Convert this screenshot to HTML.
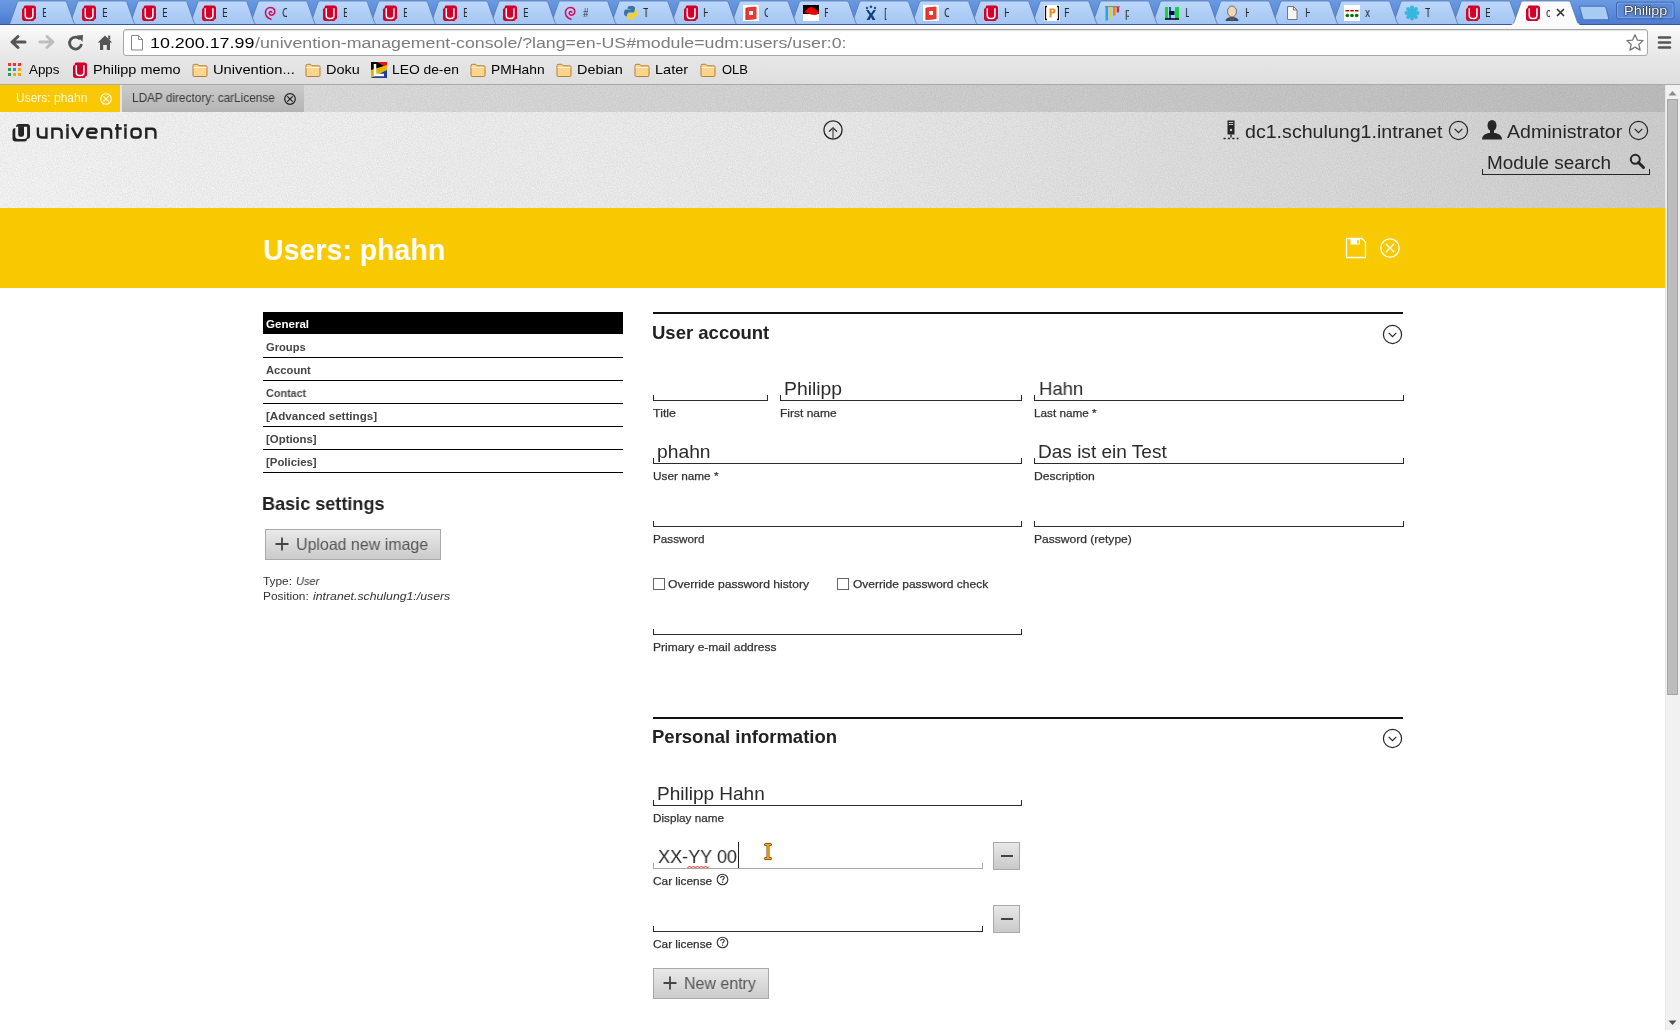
<!DOCTYPE html>
<html><head><meta charset="utf-8"><title>UMC</title>
<style>
*{box-sizing:border-box;margin:0;padding:0}
html,body{width:1680px;height:1030px;overflow:hidden;background:#fff;font-family:"Liberation Sans", sans-serif;position:relative}
svg{position:absolute;overflow:visible}
</style></head><body>
<div style="position:absolute;left:0;top:0;width:1680px;height:25px;background:linear-gradient(#6a9ae1,#5f8fdc 40%,#4a79d0)"></div>
<svg style="left:0;top:0" width="1680" height="25" viewBox="0 0 1680 25"><defs><linearGradient id="tabg" x1="0" y1="0" x2="0" y2="1"><stop offset="0" stop-color="#bcd8fb"/><stop offset="1" stop-color="#a3c5f2"/></linearGradient></defs><path d="M1451.10 24.5 C1452.60 24.5 1453.30 23.8 1453.70 22.8 L1460.70 2.9 C1461.20 1.6 1462.00 1 1463.50 1 L1507.70 1 C1509.20 1 1510.00 1.6 1510.50 2.9 L1517.50 22.8 C1517.90 23.8 1518.60 24.5 1520.10 24.5 Z" fill="url(#tabg)" stroke="#5578b0" stroke-width="0.8"/><path d="M1390.95 24.5 C1392.45 24.5 1393.15 23.8 1393.55 22.8 L1400.55 2.9 C1401.05 1.6 1401.85 1 1403.35 1 L1447.55 1 C1449.05 1 1449.85 1.6 1450.35 2.9 L1457.35 22.8 C1457.75 23.8 1458.45 24.5 1459.95 24.5 Z" fill="url(#tabg)" stroke="#5578b0" stroke-width="0.8"/><path d="M1330.80 24.5 C1332.30 24.5 1333.00 23.8 1333.40 22.8 L1340.40 2.9 C1340.90 1.6 1341.70 1 1343.20 1 L1387.40 1 C1388.90 1 1389.70 1.6 1390.20 2.9 L1397.20 22.8 C1397.60 23.8 1398.30 24.5 1399.80 24.5 Z" fill="url(#tabg)" stroke="#5578b0" stroke-width="0.8"/><path d="M1270.65 24.5 C1272.15 24.5 1272.85 23.8 1273.25 22.8 L1280.25 2.9 C1280.75 1.6 1281.55 1 1283.05 1 L1327.25 1 C1328.75 1 1329.55 1.6 1330.05 2.9 L1337.05 22.8 C1337.45 23.8 1338.15 24.5 1339.65 24.5 Z" fill="url(#tabg)" stroke="#5578b0" stroke-width="0.8"/><path d="M1210.50 24.5 C1212.00 24.5 1212.70 23.8 1213.10 22.8 L1220.10 2.9 C1220.60 1.6 1221.40 1 1222.90 1 L1267.10 1 C1268.60 1 1269.40 1.6 1269.90 2.9 L1276.90 22.8 C1277.30 23.8 1278.00 24.5 1279.50 24.5 Z" fill="url(#tabg)" stroke="#5578b0" stroke-width="0.8"/><path d="M1150.35 24.5 C1151.85 24.5 1152.55 23.8 1152.95 22.8 L1159.95 2.9 C1160.45 1.6 1161.25 1 1162.75 1 L1206.95 1 C1208.45 1 1209.25 1.6 1209.75 2.9 L1216.75 22.8 C1217.15 23.8 1217.85 24.5 1219.35 24.5 Z" fill="url(#tabg)" stroke="#5578b0" stroke-width="0.8"/><path d="M1090.20 24.5 C1091.70 24.5 1092.40 23.8 1092.80 22.8 L1099.80 2.9 C1100.30 1.6 1101.10 1 1102.60 1 L1146.80 1 C1148.30 1 1149.10 1.6 1149.60 2.9 L1156.60 22.8 C1157.00 23.8 1157.70 24.5 1159.20 24.5 Z" fill="url(#tabg)" stroke="#5578b0" stroke-width="0.8"/><path d="M1030.05 24.5 C1031.55 24.5 1032.25 23.8 1032.65 22.8 L1039.65 2.9 C1040.15 1.6 1040.95 1 1042.45 1 L1086.65 1 C1088.15 1 1088.95 1.6 1089.45 2.9 L1096.45 22.8 C1096.85 23.8 1097.55 24.5 1099.05 24.5 Z" fill="url(#tabg)" stroke="#5578b0" stroke-width="0.8"/><path d="M969.90 24.5 C971.40 24.5 972.10 23.8 972.50 22.8 L979.50 2.9 C980.00 1.6 980.80 1 982.30 1 L1026.50 1 C1028.00 1 1028.80 1.6 1029.30 2.9 L1036.30 22.8 C1036.70 23.8 1037.40 24.5 1038.90 24.5 Z" fill="url(#tabg)" stroke="#5578b0" stroke-width="0.8"/><path d="M909.75 24.5 C911.25 24.5 911.95 23.8 912.35 22.8 L919.35 2.9 C919.85 1.6 920.65 1 922.15 1 L966.35 1 C967.85 1 968.65 1.6 969.15 2.9 L976.15 22.8 C976.55 23.8 977.25 24.5 978.75 24.5 Z" fill="url(#tabg)" stroke="#5578b0" stroke-width="0.8"/><path d="M849.60 24.5 C851.10 24.5 851.80 23.8 852.20 22.8 L859.20 2.9 C859.70 1.6 860.50 1 862.00 1 L906.20 1 C907.70 1 908.50 1.6 909.00 2.9 L916.00 22.8 C916.40 23.8 917.10 24.5 918.60 24.5 Z" fill="url(#tabg)" stroke="#5578b0" stroke-width="0.8"/><path d="M789.45 24.5 C790.95 24.5 791.65 23.8 792.05 22.8 L799.05 2.9 C799.55 1.6 800.35 1 801.85 1 L846.05 1 C847.55 1 848.35 1.6 848.85 2.9 L855.85 22.8 C856.25 23.8 856.95 24.5 858.45 24.5 Z" fill="url(#tabg)" stroke="#5578b0" stroke-width="0.8"/><path d="M729.30 24.5 C730.80 24.5 731.50 23.8 731.90 22.8 L738.90 2.9 C739.40 1.6 740.20 1 741.70 1 L785.90 1 C787.40 1 788.20 1.6 788.70 2.9 L795.70 22.8 C796.10 23.8 796.80 24.5 798.30 24.5 Z" fill="url(#tabg)" stroke="#5578b0" stroke-width="0.8"/><path d="M669.15 24.5 C670.65 24.5 671.35 23.8 671.75 22.8 L678.75 2.9 C679.25 1.6 680.05 1 681.55 1 L725.75 1 C727.25 1 728.05 1.6 728.55 2.9 L735.55 22.8 C735.95 23.8 736.65 24.5 738.15 24.5 Z" fill="url(#tabg)" stroke="#5578b0" stroke-width="0.8"/><path d="M609.00 24.5 C610.50 24.5 611.20 23.8 611.60 22.8 L618.60 2.9 C619.10 1.6 619.90 1 621.40 1 L665.60 1 C667.10 1 667.90 1.6 668.40 2.9 L675.40 22.8 C675.80 23.8 676.50 24.5 678.00 24.5 Z" fill="url(#tabg)" stroke="#5578b0" stroke-width="0.8"/><path d="M548.85 24.5 C550.35 24.5 551.05 23.8 551.45 22.8 L558.45 2.9 C558.95 1.6 559.75 1 561.25 1 L605.45 1 C606.95 1 607.75 1.6 608.25 2.9 L615.25 22.8 C615.65 23.8 616.35 24.5 617.85 24.5 Z" fill="url(#tabg)" stroke="#5578b0" stroke-width="0.8"/><path d="M488.70 24.5 C490.20 24.5 490.90 23.8 491.30 22.8 L498.30 2.9 C498.80 1.6 499.60 1 501.10 1 L545.30 1 C546.80 1 547.60 1.6 548.10 2.9 L555.10 22.8 C555.50 23.8 556.20 24.5 557.70 24.5 Z" fill="url(#tabg)" stroke="#5578b0" stroke-width="0.8"/><path d="M428.55 24.5 C430.05 24.5 430.75 23.8 431.15 22.8 L438.15 2.9 C438.65 1.6 439.45 1 440.95 1 L485.15 1 C486.65 1 487.45 1.6 487.95 2.9 L494.95 22.8 C495.35 23.8 496.05 24.5 497.55 24.5 Z" fill="url(#tabg)" stroke="#5578b0" stroke-width="0.8"/><path d="M368.40 24.5 C369.90 24.5 370.60 23.8 371.00 22.8 L378.00 2.9 C378.50 1.6 379.30 1 380.80 1 L425.00 1 C426.50 1 427.30 1.6 427.80 2.9 L434.80 22.8 C435.20 23.8 435.90 24.5 437.40 24.5 Z" fill="url(#tabg)" stroke="#5578b0" stroke-width="0.8"/><path d="M308.25 24.5 C309.75 24.5 310.45 23.8 310.85 22.8 L317.85 2.9 C318.35 1.6 319.15 1 320.65 1 L364.85 1 C366.35 1 367.15 1.6 367.65 2.9 L374.65 22.8 C375.05 23.8 375.75 24.5 377.25 24.5 Z" fill="url(#tabg)" stroke="#5578b0" stroke-width="0.8"/><path d="M248.10 24.5 C249.60 24.5 250.30 23.8 250.70 22.8 L257.70 2.9 C258.20 1.6 259.00 1 260.50 1 L304.70 1 C306.20 1 307.00 1.6 307.50 2.9 L314.50 22.8 C314.90 23.8 315.60 24.5 317.10 24.5 Z" fill="url(#tabg)" stroke="#5578b0" stroke-width="0.8"/><path d="M187.95 24.5 C189.45 24.5 190.15 23.8 190.55 22.8 L197.55 2.9 C198.05 1.6 198.85 1 200.35 1 L244.55 1 C246.05 1 246.85 1.6 247.35 2.9 L254.35 22.8 C254.75 23.8 255.45 24.5 256.95 24.5 Z" fill="url(#tabg)" stroke="#5578b0" stroke-width="0.8"/><path d="M127.80 24.5 C129.30 24.5 130.00 23.8 130.40 22.8 L137.40 2.9 C137.90 1.6 138.70 1 140.20 1 L184.40 1 C185.90 1 186.70 1.6 187.20 2.9 L194.20 22.8 C194.60 23.8 195.30 24.5 196.80 24.5 Z" fill="url(#tabg)" stroke="#5578b0" stroke-width="0.8"/><path d="M67.65 24.5 C69.15 24.5 69.85 23.8 70.25 22.8 L77.25 2.9 C77.75 1.6 78.55 1 80.05 1 L124.25 1 C125.75 1 126.55 1.6 127.05 2.9 L134.05 22.8 C134.45 23.8 135.15 24.5 136.65 24.5 Z" fill="url(#tabg)" stroke="#5578b0" stroke-width="0.8"/><path d="M7.50 24.5 C9.00 24.5 9.70 23.8 10.10 22.8 L17.10 2.9 C17.60 1.6 18.40 1 19.90 1 L64.10 1 C65.60 1 66.40 1.6 66.90 2.9 L73.90 22.8 C74.30 23.8 75.00 24.5 76.50 24.5 Z" fill="url(#tabg)" stroke="#5578b0" stroke-width="0.8"/><rect x="0" y="24" width="1680" height="1" fill="#34579f"/><path d="M1579.5 6.2 L1603 6.2 C1605 6.2 1605.5 7 1606 8 L1609 19.8 L1585.5 19.8 C1583.8 19.8 1583 19 1582.5 18 Z" fill="#a8cbf6" stroke="#3f66ad" stroke-width="0.9"/><rect x="1616.5" y="2.2" width="57.5" height="16.5" rx="2" fill="#5a8ad8" stroke="#3c62a8" stroke-width="0.9"/><rect x="1617.6" y="3.2" width="55.3" height="14.5" rx="1.5" fill="none" stroke="#8ab0ea" stroke-width="0.7"/><path d="M1511.25 24.5 C1512.75 24.5 1513.45 23.8 1513.85 22.8 L1520.85 2.9 C1521.35 1.6 1522.15 1 1523.65 1 L1567.85 1 C1569.35 1 1570.15 1.6 1570.65 2.9 L1577.65 22.8 C1578.05 23.8 1578.75 24.5 1580.25 24.5 Z" fill="#fbfbfb" stroke="#5578b0" stroke-width="0.8"/><rect x="1512.25" y="23.6" width="67" height="2" fill="#fbfbfb"/></svg>
<svg style="left:21.00px;top:5px" width="16" height="16" viewBox="0 0 16 16"><path d="M4 0.6h8.5c1.5 0 2.5 1 2.5 2.5v9.3c0 1.2-.6 1.9-1.6 2.1-.3 1-1 1.5-2.2 1.5H3.5C1.9 16 1 15.1 1 13.5V5.2c0-1.2.6-1.9 1.5-2.1C2.8 1.3 3.3.6 4 .6z" fill="#d2002a"/><path d="M4.3 3.3v7.2c0 2.1.9 3 2.8 3h2c1.9 0 2.8-.9 2.8-3V3.3" fill="none" stroke="#fff" stroke-width="1.5"/></svg>
<div style="position:absolute;left:41.80px;top:4px;width:4.6px;height:17px;overflow:hidden"><div style="position:absolute;left:0;top:2.84px;font-size:12px;line-height:12px;color:#2a2a2a;white-space:nowrap;transform:scaleX(0.85);transform-origin:0 0;will-change:transform">E</div></div>
<svg style="left:81.15px;top:5px" width="16" height="16" viewBox="0 0 16 16"><path d="M4 0.6h8.5c1.5 0 2.5 1 2.5 2.5v9.3c0 1.2-.6 1.9-1.6 2.1-.3 1-1 1.5-2.2 1.5H3.5C1.9 16 1 15.1 1 13.5V5.2c0-1.2.6-1.9 1.5-2.1C2.8 1.3 3.3.6 4 .6z" fill="#d2002a"/><path d="M4.3 3.3v7.2c0 2.1.9 3 2.8 3h2c1.9 0 2.8-.9 2.8-3V3.3" fill="none" stroke="#fff" stroke-width="1.5"/></svg>
<div style="position:absolute;left:101.95px;top:4px;width:4.6px;height:17px;overflow:hidden"><div style="position:absolute;left:0;top:2.84px;font-size:12px;line-height:12px;color:#2a2a2a;white-space:nowrap;transform:scaleX(0.85);transform-origin:0 0;will-change:transform">E</div></div>
<svg style="left:141.30px;top:5px" width="16" height="16" viewBox="0 0 16 16"><path d="M4 0.6h8.5c1.5 0 2.5 1 2.5 2.5v9.3c0 1.2-.6 1.9-1.6 2.1-.3 1-1 1.5-2.2 1.5H3.5C1.9 16 1 15.1 1 13.5V5.2c0-1.2.6-1.9 1.5-2.1C2.8 1.3 3.3.6 4 .6z" fill="#d2002a"/><path d="M4.3 3.3v7.2c0 2.1.9 3 2.8 3h2c1.9 0 2.8-.9 2.8-3V3.3" fill="none" stroke="#fff" stroke-width="1.5"/></svg>
<div style="position:absolute;left:162.10px;top:4px;width:4.6px;height:17px;overflow:hidden"><div style="position:absolute;left:0;top:2.84px;font-size:12px;line-height:12px;color:#2a2a2a;white-space:nowrap;transform:scaleX(0.85);transform-origin:0 0;will-change:transform">E</div></div>
<svg style="left:201.45px;top:5px" width="16" height="16" viewBox="0 0 16 16"><path d="M4 0.6h8.5c1.5 0 2.5 1 2.5 2.5v9.3c0 1.2-.6 1.9-1.6 2.1-.3 1-1 1.5-2.2 1.5H3.5C1.9 16 1 15.1 1 13.5V5.2c0-1.2.6-1.9 1.5-2.1C2.8 1.3 3.3.6 4 .6z" fill="#d2002a"/><path d="M4.3 3.3v7.2c0 2.1.9 3 2.8 3h2c1.9 0 2.8-.9 2.8-3V3.3" fill="none" stroke="#fff" stroke-width="1.5"/></svg>
<div style="position:absolute;left:222.25px;top:4px;width:4.6px;height:17px;overflow:hidden"><div style="position:absolute;left:0;top:2.84px;font-size:12px;line-height:12px;color:#2a2a2a;white-space:nowrap;transform:scaleX(0.85);transform-origin:0 0;will-change:transform">E</div></div>
<svg style="left:261.60px;top:5px" width="16" height="16" viewBox="0 0 16 16"><path d="M9.5 14.5C5 13 3 10 3.5 6.5 4.2 3 8 1.5 10.8 3 13.5 4.5 13.5 8.5 11 9.8 8.5 11 6.5 9 7.5 7.2 8.3 6 10 6.5 9.8 7.8" fill="none" stroke="#d70a53" stroke-width="1.5"/></svg>
<div style="position:absolute;left:282.40px;top:4px;width:4.6px;height:17px;overflow:hidden"><div style="position:absolute;left:0;top:2.84px;font-size:12px;line-height:12px;color:#2a2a2a;white-space:nowrap;transform:scaleX(0.85);transform-origin:0 0;will-change:transform">C</div></div>
<svg style="left:321.75px;top:5px" width="16" height="16" viewBox="0 0 16 16"><path d="M4 0.6h8.5c1.5 0 2.5 1 2.5 2.5v9.3c0 1.2-.6 1.9-1.6 2.1-.3 1-1 1.5-2.2 1.5H3.5C1.9 16 1 15.1 1 13.5V5.2c0-1.2.6-1.9 1.5-2.1C2.8 1.3 3.3.6 4 .6z" fill="#d2002a"/><path d="M4.3 3.3v7.2c0 2.1.9 3 2.8 3h2c1.9 0 2.8-.9 2.8-3V3.3" fill="none" stroke="#fff" stroke-width="1.5"/></svg>
<div style="position:absolute;left:342.55px;top:4px;width:4.6px;height:17px;overflow:hidden"><div style="position:absolute;left:0;top:2.84px;font-size:12px;line-height:12px;color:#2a2a2a;white-space:nowrap;transform:scaleX(0.85);transform-origin:0 0;will-change:transform">E</div></div>
<svg style="left:381.90px;top:5px" width="16" height="16" viewBox="0 0 16 16"><path d="M4 0.6h8.5c1.5 0 2.5 1 2.5 2.5v9.3c0 1.2-.6 1.9-1.6 2.1-.3 1-1 1.5-2.2 1.5H3.5C1.9 16 1 15.1 1 13.5V5.2c0-1.2.6-1.9 1.5-2.1C2.8 1.3 3.3.6 4 .6z" fill="#d2002a"/><path d="M4.3 3.3v7.2c0 2.1.9 3 2.8 3h2c1.9 0 2.8-.9 2.8-3V3.3" fill="none" stroke="#fff" stroke-width="1.5"/></svg>
<div style="position:absolute;left:402.70px;top:4px;width:4.6px;height:17px;overflow:hidden"><div style="position:absolute;left:0;top:2.84px;font-size:12px;line-height:12px;color:#2a2a2a;white-space:nowrap;transform:scaleX(0.85);transform-origin:0 0;will-change:transform">E</div></div>
<svg style="left:442.05px;top:5px" width="16" height="16" viewBox="0 0 16 16"><path d="M4 0.6h8.5c1.5 0 2.5 1 2.5 2.5v9.3c0 1.2-.6 1.9-1.6 2.1-.3 1-1 1.5-2.2 1.5H3.5C1.9 16 1 15.1 1 13.5V5.2c0-1.2.6-1.9 1.5-2.1C2.8 1.3 3.3.6 4 .6z" fill="#d2002a"/><path d="M4.3 3.3v7.2c0 2.1.9 3 2.8 3h2c1.9 0 2.8-.9 2.8-3V3.3" fill="none" stroke="#fff" stroke-width="1.5"/></svg>
<div style="position:absolute;left:462.85px;top:4px;width:4.6px;height:17px;overflow:hidden"><div style="position:absolute;left:0;top:2.84px;font-size:12px;line-height:12px;color:#2a2a2a;white-space:nowrap;transform:scaleX(0.85);transform-origin:0 0;will-change:transform">E</div></div>
<svg style="left:502.20px;top:5px" width="16" height="16" viewBox="0 0 16 16"><path d="M4 0.6h8.5c1.5 0 2.5 1 2.5 2.5v9.3c0 1.2-.6 1.9-1.6 2.1-.3 1-1 1.5-2.2 1.5H3.5C1.9 16 1 15.1 1 13.5V5.2c0-1.2.6-1.9 1.5-2.1C2.8 1.3 3.3.6 4 .6z" fill="#d2002a"/><path d="M4.3 3.3v7.2c0 2.1.9 3 2.8 3h2c1.9 0 2.8-.9 2.8-3V3.3" fill="none" stroke="#fff" stroke-width="1.5"/></svg>
<div style="position:absolute;left:523.00px;top:4px;width:4.6px;height:17px;overflow:hidden"><div style="position:absolute;left:0;top:2.84px;font-size:12px;line-height:12px;color:#2a2a2a;white-space:nowrap;transform:scaleX(0.85);transform-origin:0 0;will-change:transform">E</div></div>
<svg style="left:562.35px;top:5px" width="16" height="16" viewBox="0 0 16 16"><path d="M9.5 14.5C5 13 3 10 3.5 6.5 4.2 3 8 1.5 10.8 3 13.5 4.5 13.5 8.5 11 9.8 8.5 11 6.5 9 7.5 7.2 8.3 6 10 6.5 9.8 7.8" fill="none" stroke="#d70a53" stroke-width="1.5"/></svg>
<div style="position:absolute;left:583.15px;top:4px;width:4.6px;height:17px;overflow:hidden"><div style="position:absolute;left:0;top:2.84px;font-size:12px;line-height:12px;color:#2a2a2a;white-space:nowrap;transform:scaleX(0.85);transform-origin:0 0;will-change:transform">#</div></div>
<svg style="left:622.50px;top:5px" width="16" height="16" viewBox="0 0 16 16"><path d="M7.8 1C4.5 1 4.7 2.4 4.7 2.4V4h3.2v.6H3.4S1 4.3 1 7.8s2.1 3.4 2.1 3.4h1.3V9.5s-.1-2.1 2.1-2.1h3.5s2 0 2-2V2.9S12.3 1 7.8 1z" fill="#3b73a8"/><path d="M8.2 15c3.3 0 3.1-1.4 3.1-1.4V12H8.1v-.6h4.5S15 11.7 15 8.2s-2.1-3.4-2.1-3.4h-1.3v1.7s.1 2.1-2.1 2.1H6s-2 0-2 2v2.6S3.7 15 8.2 15z" fill="#f5cf3a"/></svg>
<div style="position:absolute;left:643.30px;top:4px;width:4.6px;height:17px;overflow:hidden"><div style="position:absolute;left:0;top:2.84px;font-size:12px;line-height:12px;color:#2a2a2a;white-space:nowrap;transform:scaleX(0.85);transform-origin:0 0;will-change:transform">T</div></div>
<svg style="left:682.65px;top:5px" width="16" height="16" viewBox="0 0 16 16"><path d="M4 0.6h8.5c1.5 0 2.5 1 2.5 2.5v9.3c0 1.2-.6 1.9-1.6 2.1-.3 1-1 1.5-2.2 1.5H3.5C1.9 16 1 15.1 1 13.5V5.2c0-1.2.6-1.9 1.5-2.1C2.8 1.3 3.3.6 4 .6z" fill="#d2002a"/><path d="M4.3 3.3v7.2c0 2.1.9 3 2.8 3h2c1.9 0 2.8-.9 2.8-3V3.3" fill="none" stroke="#fff" stroke-width="1.5"/></svg>
<div style="position:absolute;left:703.45px;top:4px;width:4.6px;height:17px;overflow:hidden"><div style="position:absolute;left:0;top:2.84px;font-size:12px;line-height:12px;color:#2a2a2a;white-space:nowrap;transform:scaleX(0.85);transform-origin:0 0;will-change:transform">H</div></div>
<svg style="left:742.80px;top:5px" width="16" height="16" viewBox="0 0 16 16"><rect x="0" y="0" width="16" height="16" fill="#fff"/><path d="M2.5 3l10-1.5v12.5l-10 1z" fill="#c9201e"/><path d="M3.5 2.5l10-.5v12l-10 1z" fill="#e53a33"/><rect x="6" y="6" width="4" height="4" fill="#fff"/></svg>
<div style="position:absolute;left:763.60px;top:4px;width:4.6px;height:17px;overflow:hidden"><div style="position:absolute;left:0;top:2.84px;font-size:12px;line-height:12px;color:#2a2a2a;white-space:nowrap;transform:scaleX(0.85);transform-origin:0 0;will-change:transform">C</div></div>
<svg style="left:802.95px;top:5px" width="16" height="16" viewBox="0 0 16 16"><rect x="0" y="0" width="16" height="16" fill="#fff"/><rect x="0" y="0" width="16" height="9" fill="#000"/><path d="M1 7c2-1 4-5 7-5s5 3 7 4 0 4-3 4-6-1-8-2-3 0-3-1z" fill="#e00"/></svg>
<div style="position:absolute;left:823.75px;top:4px;width:4.6px;height:17px;overflow:hidden"><div style="position:absolute;left:0;top:2.84px;font-size:12px;line-height:12px;color:#2a2a2a;white-space:nowrap;transform:scaleX(0.85);transform-origin:0 0;will-change:transform">F</div></div>
<svg style="left:863.10px;top:5px" width="16" height="16" viewBox="0 0 16 16"><circle cx="8" cy="1.8" r="1.3" fill="#1d4d8a"/><circle cx="4" cy="3" r="1.2" fill="#1d4d8a"/><circle cx="12" cy="3" r="1.2" fill="#1d4d8a"/><path d="M3 5l3.5 5-3 5h3l1.5-3 1.5 3h3l-3-5L13 5h-2.5L8 8.5 5.5 5z" fill="#123e78"/></svg>
<div style="position:absolute;left:883.90px;top:4px;width:4.6px;height:17px;overflow:hidden"><div style="position:absolute;left:0;top:2.84px;font-size:12px;line-height:12px;color:#2a2a2a;white-space:nowrap;transform:scaleX(0.85);transform-origin:0 0;will-change:transform">[</div></div>
<svg style="left:923.25px;top:5px" width="16" height="16" viewBox="0 0 16 16"><rect x="0" y="0" width="16" height="16" fill="#fff"/><path d="M2.5 3l10-1.5v12.5l-10 1z" fill="#c9201e"/><path d="M3.5 2.5l10-.5v12l-10 1z" fill="#e53a33"/><rect x="6" y="6" width="4" height="4" fill="#fff"/></svg>
<div style="position:absolute;left:944.05px;top:4px;width:4.6px;height:17px;overflow:hidden"><div style="position:absolute;left:0;top:2.84px;font-size:12px;line-height:12px;color:#2a2a2a;white-space:nowrap;transform:scaleX(0.85);transform-origin:0 0;will-change:transform">C</div></div>
<svg style="left:983.40px;top:5px" width="16" height="16" viewBox="0 0 16 16"><path d="M4 0.6h8.5c1.5 0 2.5 1 2.5 2.5v9.3c0 1.2-.6 1.9-1.6 2.1-.3 1-1 1.5-2.2 1.5H3.5C1.9 16 1 15.1 1 13.5V5.2c0-1.2.6-1.9 1.5-2.1C2.8 1.3 3.3.6 4 .6z" fill="#d2002a"/><path d="M4.3 3.3v7.2c0 2.1.9 3 2.8 3h2c1.9 0 2.8-.9 2.8-3V3.3" fill="none" stroke="#fff" stroke-width="1.5"/></svg>
<div style="position:absolute;left:1004.20px;top:4px;width:4.6px;height:17px;overflow:hidden"><div style="position:absolute;left:0;top:2.84px;font-size:12px;line-height:12px;color:#2a2a2a;white-space:nowrap;transform:scaleX(0.85);transform-origin:0 0;will-change:transform">H</div></div>
<svg style="left:1043.55px;top:5px" width="16" height="16" viewBox="0 0 16 16"><rect x="0" y="0" width="16" height="16" fill="#fff"/><path d="M3 1.5H1.5v13H3M13 1.5h1.5v13H13" fill="none" stroke="#111" stroke-width="1.3"/><path d="M5.5 12.5V3.5h3.5c1.8 0 2.6 1 2.6 2.4S10.8 8.4 9 8.4H7.6v4.1z" fill="#f78c1e"/><rect x="7.6" y="5.2" width="1.6" height="1.6" fill="#fff"/></svg>
<div style="position:absolute;left:1064.35px;top:4px;width:4.6px;height:17px;overflow:hidden"><div style="position:absolute;left:0;top:2.84px;font-size:12px;line-height:12px;color:#2a2a2a;white-space:nowrap;transform:scaleX(0.85);transform-origin:0 0;will-change:transform">F</div></div>
<svg style="left:1103.70px;top:5px" width="16" height="16" viewBox="0 0 16 16"><rect x="1" y="1" width="15" height="1.3" fill="#888"/><rect x="1.5" y="2" width="2.5" height="13.5" fill="#29a3e6"/><rect x="5.2" y="2" width="2.5" height="11.5" fill="#e8d11e"/><rect x="9" y="2" width="2.5" height="8.5" fill="#ee7f1b"/><rect x="12.7" y="2" width="2.3" height="5.5" fill="#e22a2a"/></svg>
<div style="position:absolute;left:1124.50px;top:4px;width:4.6px;height:17px;overflow:hidden"><div style="position:absolute;left:0;top:2.84px;font-size:12px;line-height:12px;color:#2a2a2a;white-space:nowrap;transform:scaleX(0.85);transform-origin:0 0;will-change:transform">p</div></div>
<svg style="left:1163.85px;top:5px" width="16" height="16" viewBox="0 0 16 16"><rect x="1" y="2" width="3" height="12" fill="#17d42f"/><rect x="5" y="2" width="2" height="12" fill="#0a5fb0"/><rect x="8" y="6" width="3" height="4" fill="#1a78d8"/><rect x="11" y="2" width="4" height="12" fill="#17d42f"/><path d="M1 14h14" stroke="#000" stroke-width="1.5"/><rect x="5" y="6" width="5" height="4" fill="#111"/></svg>
<div style="position:absolute;left:1184.65px;top:4px;width:4.6px;height:17px;overflow:hidden"><div style="position:absolute;left:0;top:2.84px;font-size:12px;line-height:12px;color:#2a2a2a;white-space:nowrap;transform:scaleX(0.85);transform-origin:0 0;will-change:transform">L</div></div>
<svg style="left:1224.00px;top:5px" width="16" height="16" viewBox="0 0 16 16"><ellipse cx="8" cy="6.5" rx="4.5" ry="5.5" fill="#f0d6b7" stroke="#444" stroke-width=".7"/><path d="M1.5 16c.5-3 3-4 6.5-4s6 1 6.5 4z" fill="#335061"/><path d="M6 12.5l2 1.5 2-1.5v2H6z" fill="#d33"/></svg>
<div style="position:absolute;left:1244.80px;top:4px;width:4.6px;height:17px;overflow:hidden"><div style="position:absolute;left:0;top:2.84px;font-size:12px;line-height:12px;color:#2a2a2a;white-space:nowrap;transform:scaleX(0.85);transform-origin:0 0;will-change:transform">H</div></div>
<svg style="left:1284.15px;top:5px" width="16" height="16" viewBox="0 0 16 16"><path d="M3.5 1.5h6l3.5 3.5v9.5h-9.5z" fill="#f5f5f5" stroke="#777"/><path d="M9.5 1.5v3.5h3.5" fill="none" stroke="#777"/></svg>
<div style="position:absolute;left:1304.95px;top:4px;width:4.6px;height:17px;overflow:hidden"><div style="position:absolute;left:0;top:2.84px;font-size:12px;line-height:12px;color:#2a2a2a;white-space:nowrap;transform:scaleX(0.85);transform-origin:0 0;will-change:transform">H</div></div>
<svg style="left:1344.30px;top:5px" width="16" height="16" viewBox="0 0 16 16"><rect x="0" y="0" width="16" height="16" fill="#fff"/><rect x="1.5" y="5" width="3.5" height="1.5" fill="#c00"/><rect x="6.3" y="5" width="3.5" height="1.5" fill="#c00"/><rect x="11" y="5" width="3.5" height="1.5" fill="#c00"/><circle cx="3.3" cy="10.5" r="1.8" fill="#070"/><circle cx="8" cy="10.5" r="1.8" fill="#070"/><circle cx="12.7" cy="10.5" r="1.8" fill="#070"/></svg>
<div style="position:absolute;left:1365.10px;top:4px;width:4.6px;height:17px;overflow:hidden"><div style="position:absolute;left:0;top:2.84px;font-size:12px;line-height:12px;color:#2a2a2a;white-space:nowrap;transform:scaleX(0.85);transform-origin:0 0;will-change:transform">x</div></div>
<svg style="left:1404.45px;top:5px" width="16" height="16" viewBox="0 0 16 16"><g fill="#35b6dc"><circle cx="8" cy="8" r="4.5"/><circle cx="8" cy="2.5" r="2"/><circle cx="8" cy="13.5" r="2"/><circle cx="2.5" cy="8" r="2"/><circle cx="13.5" cy="8" r="2"/><circle cx="4.1" cy="4.1" r="2"/><circle cx="11.9" cy="4.1" r="2"/><circle cx="4.1" cy="11.9" r="2"/><circle cx="11.9" cy="11.9" r="2"/></g></svg>
<div style="position:absolute;left:1425.25px;top:4px;width:4.6px;height:17px;overflow:hidden"><div style="position:absolute;left:0;top:2.84px;font-size:12px;line-height:12px;color:#2a2a2a;white-space:nowrap;transform:scaleX(0.85);transform-origin:0 0;will-change:transform">T</div></div>
<svg style="left:1464.60px;top:5px" width="16" height="16" viewBox="0 0 16 16"><path d="M4 0.6h8.5c1.5 0 2.5 1 2.5 2.5v9.3c0 1.2-.6 1.9-1.6 2.1-.3 1-1 1.5-2.2 1.5H3.5C1.9 16 1 15.1 1 13.5V5.2c0-1.2.6-1.9 1.5-2.1C2.8 1.3 3.3.6 4 .6z" fill="#d2002a"/><path d="M4.3 3.3v7.2c0 2.1.9 3 2.8 3h2c1.9 0 2.8-.9 2.8-3V3.3" fill="none" stroke="#fff" stroke-width="1.5"/></svg>
<div style="position:absolute;left:1485.40px;top:4px;width:4.6px;height:17px;overflow:hidden"><div style="position:absolute;left:0;top:2.84px;font-size:12px;line-height:12px;color:#2a2a2a;white-space:nowrap;transform:scaleX(0.85);transform-origin:0 0;will-change:transform">E</div></div>
<svg style="left:1524.75px;top:5px" width="16" height="16" viewBox="0 0 16 16"><path d="M4 0.6h8.5c1.5 0 2.5 1 2.5 2.5v9.3c0 1.2-.6 1.9-1.6 2.1-.3 1-1 1.5-2.2 1.5H3.5C1.9 16 1 15.1 1 13.5V5.2c0-1.2.6-1.9 1.5-2.1C2.8 1.3 3.3.6 4 .6z" fill="#d2002a"/><path d="M4.3 3.3v7.2c0 2.1.9 3 2.8 3h2c1.9 0 2.8-.9 2.8-3V3.3" fill="none" stroke="#fff" stroke-width="1.5"/></svg>
<div style="position:absolute;left:1545.55px;top:4px;width:4.6px;height:17px;overflow:hidden"><div style="position:absolute;left:0;top:2.84px;font-size:12px;line-height:12px;color:#2a2a2a;white-space:nowrap;transform:scaleX(0.85);transform-origin:0 0;will-change:transform">c</div></div>
<svg style="left:1556px;top:8px" width="9" height="9" viewBox="0 0 9 9"><path d="M1 1L8 8M8 1L1 8" stroke="#333" stroke-width="1.6"/></svg>
<div style="position:absolute;left:0;top:25px;width:1680px;height:60px;background:linear-gradient(#fbfbfb 0,#f1f1f1 15px,#e7e7e7 32px,#e4e4e4 40px,#dedede 59px)"></div>
<div style="position:absolute;left:0;top:84px;width:1680px;height:1px;background:#a9a9a9"></div>
<div style="position:absolute;left:123px;top:29px;width:1525px;height:27px;background:#fff;border:1px solid #a8a8a8;border-radius:3px;box-shadow:inset 0 1px 1px rgba(0,0,0,.12)"></div>
<svg style="left:9px;top:34px" width="18" height="16" viewBox="0 0 18 16"><path d="M16 8H4M9 2.5L3 8l6 5.5" fill="none" stroke="#555" stroke-width="3" stroke-linecap="round" stroke-linejoin="round"/></svg>
<svg style="left:38px;top:34px" width="18" height="16" viewBox="0 0 18 16"><path d="M2 8h12M9 2.5L15 8l-6 5.5" fill="none" stroke="#bdbdbd" stroke-width="3" stroke-linecap="round" stroke-linejoin="round"/></svg>
<svg style="left:67px;top:34px" width="18" height="17" viewBox="0 0 18 17"><path d="M13.2 5.2A6 6 0 1 0 14.5 10" fill="none" stroke="#555" stroke-width="2.8"/><path d="M9.5 1.5L16 1l-.5 6.8z" fill="#555"/></svg>
<svg style="left:97px;top:34px" width="16" height="17" viewBox="0 0 16 17"><path d="M0.8 8.5L8 1.5l7.2 7H13v7.5H9.8v-5H6.2v5H3V8.5z" fill="#555"/><rect x="11.2" y="1.5" width="2" height="4" fill="#555"/></svg>
<svg style="left:130px;top:34px" width="14" height="17" viewBox="0 0 14 17"><path d="M1.5 1.5h7l4 4v10.5h-11z" fill="#fff" stroke="#888" stroke-width="1"/><path d="M8.5 1.5v4h4" fill="none" stroke="#888"/></svg>
<svg style="left:1625px;top:33px" width="20" height="19" viewBox="0 0 20 19"><path d="M10 1.8l2.4 5.3 5.7.5-4.3 3.8 1.3 5.7L10 14.1 4.9 17.1l1.3-5.7L1.9 7.6l5.7-.5z" fill="#fff" stroke="#777" stroke-width="1.3" stroke-linejoin="round"/></svg>
<svg style="left:1657px;top:35px" width="16" height="14" viewBox="0 0 16 14"><path d="M2 2.5h11M2 7.5h11M2 12.5h11" stroke="#555" stroke-width="2.6" stroke-linecap="round"/></svg>
<svg style="left:8px;top:63px" width="14" height="14" viewBox="0 0 14 14"><g><rect x="0" y="0" width="3" height="3" fill="#e33"/><rect x="5" y="0" width="3" height="3" fill="#e33"/><rect x="10" y="0" width="3" height="3" fill="#e33"/><rect x="0" y="5" width="3" height="3" fill="#2a9d4a"/><rect x="5" y="5" width="3" height="3" fill="#2f8ee8"/><rect x="10" y="5" width="3" height="3" fill="#f4a300"/><rect x="0" y="10" width="3" height="3" fill="#2a9d4a"/><rect x="5" y="10" width="3" height="3" fill="#f4a300"/><rect x="10" y="10" width="3" height="3" fill="#f4a300"/></g></svg>
<svg style="left:72px;top:62px" width="16" height="16" viewBox="0 0 16 16"><path d="M4 0.6h8.5c1.5 0 2.5 1 2.5 2.5v9.3c0 1.2-.6 1.9-1.6 2.1-.3 1-1 1.5-2.2 1.5H3.5C1.9 16 1 15.1 1 13.5V5.2c0-1.2.6-1.9 1.5-2.1C2.8 1.3 3.3.6 4 .6z" fill="#d2002a"/><path d="M4.3 3.3v7.2c0 2.1.9 3 2.8 3h2c1.9 0 2.8-.9 2.8-3V3.3" fill="none" stroke="#fff" stroke-width="1.5"/></svg>
<svg style="left:191.5px;top:63px" width="16" height="14" viewBox="0 0 16 14"><path d="M1 2.5c0-.8.4-1.2 1.2-1.2h3.6l1.3 1.5h6.8c.8 0 1.1.4 1.1 1.1v8.4c0 .8-.4 1.2-1.2 1.2H2.2c-.8 0-1.2-.4-1.2-1.2z" fill="#fbd58c" stroke="#a8772d" stroke-width=".9"/><path d="M1.5 4.5h13" stroke="#fff2cf" stroke-width="1"/></svg>
<svg style="left:304.5px;top:63px" width="16" height="14" viewBox="0 0 16 14"><path d="M1 2.5c0-.8.4-1.2 1.2-1.2h3.6l1.3 1.5h6.8c.8 0 1.1.4 1.1 1.1v8.4c0 .8-.4 1.2-1.2 1.2H2.2c-.8 0-1.2-.4-1.2-1.2z" fill="#fbd58c" stroke="#a8772d" stroke-width=".9"/><path d="M1.5 4.5h13" stroke="#fff2cf" stroke-width="1"/></svg>
<svg style="left:371px;top:62px" width="16" height="16" viewBox="0 0 16 16"><rect x="0" y="0" width="16" height="16" fill="#000"/><path d="M0 16L16 0V16z" fill="#1f3d9c"/><path d="M6 0h10v6z" fill="#e11"/><path d="M0 8l16-5v5L0 16z" fill="#f6c300" opacity=".9"/><path d="M4 2v11h9" fill="none" stroke="#fff" stroke-width="2.5"/></svg>
<svg style="left:469.5px;top:63px" width="16" height="14" viewBox="0 0 16 14"><path d="M1 2.5c0-.8.4-1.2 1.2-1.2h3.6l1.3 1.5h6.8c.8 0 1.1.4 1.1 1.1v8.4c0 .8-.4 1.2-1.2 1.2H2.2c-.8 0-1.2-.4-1.2-1.2z" fill="#fbd58c" stroke="#a8772d" stroke-width=".9"/><path d="M1.5 4.5h13" stroke="#fff2cf" stroke-width="1"/></svg>
<svg style="left:555.5px;top:63px" width="16" height="14" viewBox="0 0 16 14"><path d="M1 2.5c0-.8.4-1.2 1.2-1.2h3.6l1.3 1.5h6.8c.8 0 1.1.4 1.1 1.1v8.4c0 .8-.4 1.2-1.2 1.2H2.2c-.8 0-1.2-.4-1.2-1.2z" fill="#fbd58c" stroke="#a8772d" stroke-width=".9"/><path d="M1.5 4.5h13" stroke="#fff2cf" stroke-width="1"/></svg>
<svg style="left:633.5px;top:63px" width="16" height="14" viewBox="0 0 16 14"><path d="M1 2.5c0-.8.4-1.2 1.2-1.2h3.6l1.3 1.5h6.8c.8 0 1.1.4 1.1 1.1v8.4c0 .8-.4 1.2-1.2 1.2H2.2c-.8 0-1.2-.4-1.2-1.2z" fill="#fbd58c" stroke="#a8772d" stroke-width=".9"/><path d="M1.5 4.5h13" stroke="#fff2cf" stroke-width="1"/></svg>
<svg style="left:699.5px;top:63px" width="16" height="14" viewBox="0 0 16 14"><path d="M1 2.5c0-.8.4-1.2 1.2-1.2h3.6l1.3 1.5h6.8c.8 0 1.1.4 1.1 1.1v8.4c0 .8-.4 1.2-1.2 1.2H2.2c-.8 0-1.2-.4-1.2-1.2z" fill="#fbd58c" stroke="#a8772d" stroke-width=".9"/><path d="M1.5 4.5h13" stroke="#fff2cf" stroke-width="1"/></svg>
<div style="position:absolute;left:0;top:85px;width:1665px;height:27px;background:linear-gradient(90deg,rgb(226,226,226) 0,rgb(211,211,211) 50%,rgb(190,190,190) 100%)"></div>
<div style="position:absolute;left:0;top:112px;width:1665px;height:96px;background:linear-gradient(90deg,rgb(245,245,245) 0,rgb(235,235,235) 50%,rgb(208,208,208) 100%)"></div>
<svg style="left:0;top:85px" width="1665" height="123"><filter id="nz" x="0" y="0" width="100%" height="100%"><feTurbulence type="fractalNoise" baseFrequency="0.8" numOctaves="2" seed="3"/><feColorMatrix values="0 0 0 0 0  0 0 0 0 0  0 0 0 0 0  0 0 0 .12 -.03"/></filter><rect width="1665" height="123" filter="url(#nz)"/></svg>
<div style="position:absolute;left:0;top:85px;width:120px;height:27px;background:#f9c800"></div>
<div style="position:absolute;left:120px;top:85px;width:2px;height:27px;background:#e4e4ee"></div>
<div style="position:absolute;left:122px;top:85px;width:182px;height:27px;background:linear-gradient(#cbcbcb,#b4b4b4)"></div>
<svg style="left:99px;top:92px" width="14" height="14" viewBox="0 0 14 14"><circle cx="7" cy="7" r="5.3" fill="none" stroke="#fff" stroke-width="1.1"/><path d="M4.3 4.3l5.4 5.4M9.7 4.3l-5.4 5.4" stroke="#fff" stroke-width="1.1"/></svg>
<svg style="left:283px;top:92px" width="14" height="14" viewBox="0 0 14 14"><circle cx="7" cy="7" r="5.3" fill="none" stroke="#222" stroke-width="1.2"/><path d="M4.3 4.3l5.4 5.4M9.7 4.3l-5.4 5.4" stroke="#222" stroke-width="1.2"/></svg>
<svg style="left:0;top:110px" width="170" height="40" viewBox="0 110 170 40"><rect x="16" y="124" width="14" height="15" rx="3" fill="#242424"/><rect x="12.5" y="128" width="14.7" height="13.6" rx="3" fill="#242424"/><path d="M15.3 126.7V135.9Q15.3 138.9 18.3 138.9H24.1Q27.1 138.9 27.1 135.9V126.7Z" fill="#efefef"/><path d="M18.2 126.3H24V134.5Q24 136.7 21.8 136.7H20.4Q18.2 136.7 18.2 134.5Z" fill="#242424"/><g fill="none" stroke="#222" stroke-width="2.4" stroke-miterlimit="1.5"><path d="M37.9 127.4V133.8C37.9 136.5 38.9 137.45 41.6 137.45H46.4M46.4 127.4V138.75"/><path d="M52.4 138.75V128.7H57.9C60.6 128.7 61.6 129.7 61.6 132.4V138.75"/><path d="M67.5 127.4V138.75"/><path d="M71.9 127.4L77.45 137.6L83 127.4"/><path d="M96.6 132.8V131.8C96.6 129.6 95.6 128.7 93.4 128.7H90.5C88.3 128.7 87.3 129.7 87.3 131.9V134.3C87.3 136.5 88.3 137.45 90.5 137.45H96.8M87.3 132.8H96.6"/><path d="M102.3 138.75V128.7H107.8C110.2 128.7 111.1 129.7 111.1 132.4V138.75"/><path d="M117.4 124V138.75M115 128.5H121.7"/><path d="M125.45 127.4V138.75"/><path d="M134.5 128.7H137.4C139.7 128.7 140.6 129.7 140.6 132V134.2C140.6 136.5 139.7 137.45 137.4 137.45H134.5C132.3 137.45 131.5 136.5 131.5 134.2V132C131.5 129.7 132.3 128.7 134.5 128.7Z"/><path d="M146.3 138.75V128.7H151.9C154.4 128.7 155.4 129.7 155.4 132.4V138.75"/></g><rect x="66.1" y="124.2" width="2.8" height="2.4" fill="#222"/><rect x="124" y="124.2" width="2.8" height="2.4" fill="#222"/></svg>
<svg style="left:822px;top:119px" width="22" height="22" viewBox="0 0 22 22"><circle cx="11" cy="11" r="9.1" fill="none" stroke="#222" stroke-width="1.3"/><path d="M7 12.6l4-3.8 4 3.8" fill="none" stroke="#222" stroke-width="1.3"/><path d="M11 9V20" stroke="#555" stroke-width="1.3"/></svg>
<svg style="left:1223px;top:120px" width="16" height="20" viewBox="0 0 16 20"><rect x="4.5" y="0.5" width="7" height="14" fill="#262626"/><rect x="5.8" y="2" width="4.4" height="1" fill="#ccc"/><rect x="5.8" y="4" width="4.4" height="1" fill="#ccc"/><circle cx="8" cy="10" r="1.2" fill="#ccc"/><rect x="7.3" y="14.5" width="1.4" height="3" fill="#262626"/><path d="M0.5 18.5h15" stroke="#262626" stroke-width="1.4" stroke-dasharray="2.2 2.2"/></svg>
<svg style="left:1447.5px;top:119.5px" width="21" height="21" viewBox="0 0 21 21"><circle cx="10.5" cy="10.5" r="9.1" fill="none" stroke="#262626" stroke-width="1.2"/><path d="M6.7 8.8l3.8 3.8 3.8-3.8" fill="none" stroke="#262626" stroke-width="1.2"/></svg>
<svg style="left:1481px;top:119px" width="22" height="22" viewBox="0 0 22 22"><ellipse cx="11" cy="6.5" rx="4.5" ry="5.5" fill="#262626"/><path d="M1 20.5c0-3.5 2.5-5.5 6.5-6.5h7c4 1 6.5 3 6.5 6.5z" fill="#262626"/><rect x="9" y="11" width="4" height="4" fill="#262626"/></svg>
<svg style="left:1627.5px;top:119.5px" width="21" height="21" viewBox="0 0 21 21"><circle cx="10.5" cy="10.5" r="9.1" fill="none" stroke="#262626" stroke-width="1.2"/><path d="M6.7 8.8l3.8 3.8 3.8-3.8" fill="none" stroke="#262626" stroke-width="1.2"/></svg>
<svg style="left:1629px;top:153px" width="17" height="17" viewBox="0 0 17 17"><circle cx="6.3" cy="6.3" r="4.5" fill="none" stroke="#262626" stroke-width="2"/><path d="M9.5 9.5l5 5" stroke="#262626" stroke-width="3" stroke-linecap="round"/></svg>
<div style="position:absolute;left:1482px;top:169px;width:168px;height:6px;border:1.3px solid #262626;border-top:none"></div>
<div style="position:absolute;left:0;top:208px;width:1665px;height:80px;background:#f8c800"></div>
<svg style="left:1345px;top:237px" width="22" height="22" viewBox="0 0 22 22"><path d="M1.5 1.5h15.5l3.5 3.5v15.5H1.5z" fill="none" stroke="#fff" stroke-width="1.3" stroke-linejoin="round"/><rect x="5.5" y="2" width="9.5" height="5.5" fill="#fff"/><rect x="12" y="3.2" width="1.8" height="3.3" fill="#f8c800"/></svg>
<svg style="left:1379px;top:237px" width="22" height="22" viewBox="0 0 22 22"><circle cx="11" cy="11" r="9.2" fill="none" stroke="#fff" stroke-width="1.3"/><path d="M6.8 6.8l8.4 8.4M15.2 6.8l-8.4 8.4" stroke="#fff" stroke-width="1.3"/></svg>
<div style="position:absolute;left:263px;top:312px;width:360px;height:22px;background:#000"></div>
<div style="position:absolute;left:263px;top:357px;width:360px;height:1px;background:#000"></div>
<div style="position:absolute;left:263px;top:380px;width:360px;height:1px;background:#000"></div>
<div style="position:absolute;left:263px;top:403px;width:360px;height:1px;background:#000"></div>
<div style="position:absolute;left:263px;top:426px;width:360px;height:1px;background:#000"></div>
<div style="position:absolute;left:263px;top:449px;width:360px;height:1px;background:#000"></div>
<div style="position:absolute;left:263px;top:472px;width:360px;height:1px;background:#000"></div>
<div style="position:absolute;left:265px;top:529px;width:176px;height:31px;border:1px solid #a9a9a9;background:linear-gradient(#e9e9e9,#cbcbcb)"></div>
<svg style="left:275px;top:537px" width="14" height="14" viewBox="0 0 14 14"><path d="M7 0.5v13M0.5 7h13" stroke="#444" stroke-width="1.8"/></svg>
<div style="position:absolute;left:1665px;top:85px;width:15px;height:945px;background:#f1f1f1;border-left:1px solid #e8e8e8"></div>
<div style="position:absolute;left:1667px;top:99px;width:11px;height:596px;background:#bdbdbd;border:1px solid #a5a5a5"></div>
<svg style="left:1668px;top:90px" width="9" height="6" viewBox="0 0 9 6"><path d="M0.5 5.5L4.5 1l4 4.5z" fill="#8c8c8c"/></svg>
<svg style="left:1668px;top:1020px" width="9" height="6" viewBox="0 0 9 6"><path d="M0.5 0.5h8L4.5 5z" fill="#505050"/></svg>
<div style="position:absolute;left:653px;top:312px;width:750px;height:2px;background:#111"></div>
<svg style="left:1382.1px;top:323.5px" width="21" height="21" viewBox="0 0 21 21"><circle cx="10.5" cy="10.5" r="9.1" fill="none" stroke="#262626" stroke-width="1.2"/><path d="M6.7 8.8l3.8 3.8 3.8-3.8" fill="none" stroke="#262626" stroke-width="1.2"/></svg>
<div style="position:absolute;left:653px;top:395px;width:115px;height:6px;border:1px solid #2b2b2b;border-top:none"></div>
<div style="position:absolute;left:780px;top:395px;width:242px;height:6px;border:1px solid #2b2b2b;border-top:none"></div>
<div style="position:absolute;left:1034px;top:395px;width:370px;height:6px;border:1px solid #2b2b2b;border-top:none"></div>
<div style="position:absolute;left:653px;top:458px;width:369px;height:6px;border:1px solid #2b2b2b;border-top:none"></div>
<div style="position:absolute;left:1034px;top:458px;width:370px;height:6px;border:1px solid #2b2b2b;border-top:none"></div>
<div style="position:absolute;left:653px;top:521px;width:369px;height:6px;border:1px solid #2b2b2b;border-top:none"></div>
<div style="position:absolute;left:1034px;top:521px;width:370px;height:6px;border:1px solid #2b2b2b;border-top:none"></div>
<div style="position:absolute;left:653px;top:578px;width:12px;height:12px;border:1.5px solid #666;background:#fff"></div>
<div style="position:absolute;left:837px;top:578px;width:12px;height:12px;border:1.5px solid #666;background:#fff"></div>
<div style="position:absolute;left:653px;top:629px;width:369px;height:6px;border:1px solid #2b2b2b;border-top:none"></div>
<div style="position:absolute;left:653px;top:717px;width:750px;height:2px;background:#111"></div>
<svg style="left:1382.1px;top:727.5px" width="21" height="21" viewBox="0 0 21 21"><circle cx="10.5" cy="10.5" r="9.1" fill="none" stroke="#262626" stroke-width="1.2"/><path d="M6.7 8.8l3.8 3.8 3.8-3.8" fill="none" stroke="#262626" stroke-width="1.2"/></svg>
<div style="position:absolute;left:653px;top:800px;width:369px;height:6px;border:1px solid #2b2b2b;border-top:none"></div>
<div style="position:absolute;left:653px;top:863px;width:330px;height:6px;border:1px solid #aaa;border-top:none"></div>
<div style="position:absolute;left:738px;top:842px;width:1px;height:26px;background:#222"></div>
<svg style="left:687px;top:865px" width="23" height="4" viewBox="0 0 23 4"><path d="M0.5 3L2.5 1 4.5 3 6.5 1 8.5 3 10.5 1 12.5 3 14.5 1 16.5 3 18.5 1 20.5 3 22 1.5" fill="none" stroke="#e22" stroke-width="1"/></svg>
<svg style="left:764px;top:843px" width="8" height="17" viewBox="0 0 8 17"><path d="M1.5 1.5h5M1.5 15.5h5M4 1.5v14" fill="none" stroke="#7a4a00" stroke-width="3" stroke-linecap="round"/><path d="M1.5 1.5h5M1.5 15.5h5M4 1.5v14" fill="none" stroke="#ffa51e" stroke-width="1.6" stroke-linecap="round"/></svg>
<svg style="left:715.5px;top:872.5px" width="13" height="13" viewBox="0 0 13 13"><circle cx="6.5" cy="6.5" r="5.3" fill="none" stroke="#333" stroke-width="1.1"/><path d="M4.7 5c0-1.2.8-1.8 1.8-1.8s1.8.6 1.8 1.6c0 1.2-1.6 1.3-1.6 2.6" fill="none" stroke="#333" stroke-width="1.1"/><circle cx="6.6" cy="9.3" r=".7" fill="#333"/></svg>
<div style="position:absolute;left:993px;top:842px;width:27px;height:28px;border:1px solid #aaa;background:linear-gradient(#e8e8e8,#c9c9c9)"></div>
<div style="position:absolute;left:1001px;top:855px;width:12px;height:2px;background:#444"></div>
<div style="position:absolute;left:653px;top:926px;width:330px;height:6px;border:1px solid #2b2b2b;border-top:none"></div>
<svg style="left:715.5px;top:935.8px" width="13" height="13" viewBox="0 0 13 13"><circle cx="6.5" cy="6.5" r="5.3" fill="none" stroke="#333" stroke-width="1.1"/><path d="M4.7 5c0-1.2.8-1.8 1.8-1.8s1.8.6 1.8 1.6c0 1.2-1.6 1.3-1.6 2.6" fill="none" stroke="#333" stroke-width="1.1"/><circle cx="6.6" cy="9.3" r=".7" fill="#333"/></svg>
<div style="position:absolute;left:993px;top:905px;width:27px;height:28px;border:1px solid #aaa;background:linear-gradient(#e8e8e8,#c9c9c9)"></div>
<div style="position:absolute;left:1001px;top:918px;width:12px;height:2px;background:#444"></div>
<div style="position:absolute;left:653px;top:968px;width:116px;height:31px;border:1px solid #a9a9a9;background:linear-gradient(#e9e9e9,#cbcbcb)"></div>
<svg style="left:663px;top:976px" width="14" height="14" viewBox="0 0 14 14"><path d="M7 0.5v13M0.5 7h13" stroke="#444" stroke-width="1.8"/></svg>
<div style="position:absolute;left:1623.89px;top:3.50px;font-size:13px;line-height:13px;font-weight:normal;font-style:normal;color:#fff;white-space:nowrap;transform:scaleX(1.1112);transform-origin:0 0;will-change:transform;text-shadow:0 0 1px #000,0 0 1px #000,0 0 2px #223;">Philipp</div>
<div style="position:absolute;left:149.85px;top:34.78px;font-size:15.5px;line-height:15.5px;font-weight:normal;font-style:normal;color:#000;white-space:nowrap;transform:scaleX(1.1532);transform-origin:0 0;will-change:transform;">10.200.17.99</div>
<div style="position:absolute;left:254.50px;top:34.78px;font-size:15.5px;line-height:15.5px;font-weight:normal;font-style:normal;color:#7c7c7c;white-space:nowrap;transform:scaleX(1.1442);transform-origin:0 0;will-change:transform;">/univention-management-console/?lang=en-US#module=udm:users/user:0:</div>
<div style="position:absolute;left:28.90px;top:63.00px;font-size:13px;line-height:13px;font-weight:normal;font-style:normal;color:#000;white-space:nowrap;transform:scaleX(1.0288);transform-origin:0 0;will-change:transform;">Apps</div>
<div style="position:absolute;left:92.69px;top:63.00px;font-size:13px;line-height:13px;font-weight:normal;font-style:normal;color:#000;white-space:nowrap;transform:scaleX(1.1119);transform-origin:0 0;will-change:transform;">Philipp memo</div>
<div style="position:absolute;left:212.57px;top:63.00px;font-size:13px;line-height:13px;font-weight:normal;font-style:normal;color:#000;white-space:nowrap;transform:scaleX(1.1309);transform-origin:0 0;will-change:transform;">Univention...</div>
<div style="position:absolute;left:325.69px;top:63.00px;font-size:13px;line-height:13px;font-weight:normal;font-style:normal;color:#000;white-space:nowrap;transform:scaleX(1.1127);transform-origin:0 0;will-change:transform;">Doku</div>
<div style="position:absolute;left:391.64px;top:63.00px;font-size:13px;line-height:13px;font-weight:normal;font-style:normal;color:#000;white-space:nowrap;transform:scaleX(1.0626);transform-origin:0 0;will-change:transform;">LEO de-en</div>
<div style="position:absolute;left:490.54px;top:63.00px;font-size:13px;line-height:13px;font-weight:normal;font-style:normal;color:#000;white-space:nowrap;transform:scaleX(1.0598);transform-origin:0 0;will-change:transform;">PMHahn</div>
<div style="position:absolute;left:576.59px;top:63.00px;font-size:13px;line-height:13px;font-weight:normal;font-style:normal;color:#000;white-space:nowrap;transform:scaleX(1.1084);transform-origin:0 0;will-change:transform;">Debian</div>
<div style="position:absolute;left:654.68px;top:63.00px;font-size:13px;line-height:13px;font-weight:normal;font-style:normal;color:#000;white-space:nowrap;transform:scaleX(1.1160);transform-origin:0 0;will-change:transform;">Later</div>
<div style="position:absolute;left:721.80px;top:63.00px;font-size:13px;line-height:13px;font-weight:normal;font-style:normal;color:#000;white-space:nowrap;transform:scaleX(0.9865);transform-origin:0 0;will-change:transform;">OLB</div>
<div style="position:absolute;left:15.70px;top:92.34px;font-size:12px;line-height:12px;font-weight:normal;font-style:normal;color:#fff8e0;white-space:nowrap;transform:scaleX(0.9972);transform-origin:0 0;will-change:transform;">Users: phahn</div>
<div style="position:absolute;left:131.50px;top:92.34px;font-size:12px;line-height:12px;font-weight:normal;font-style:normal;color:#3a3a3a;white-space:nowrap;transform:scaleX(0.9834);transform-origin:0 0;will-change:transform;">LDAP directory: carLicense</div>
<div style="position:absolute;left:1245.20px;top:121.92px;font-size:19px;line-height:19px;font-weight:normal;font-style:normal;color:#262626;white-space:nowrap;transform:scaleX(1.0323);transform-origin:0 0;will-change:transform;">dc1.schulung1.intranet</div>
<div style="position:absolute;left:1507.10px;top:121.92px;font-size:19px;line-height:19px;font-weight:normal;font-style:normal;color:#262626;white-space:nowrap;transform:scaleX(1.0294);transform-origin:0 0;will-change:transform;">Administrator</div>
<div style="position:absolute;left:1487.45px;top:153.96px;font-size:18px;line-height:18px;font-weight:normal;font-style:normal;color:#262626;white-space:nowrap;transform:scaleX(1.0512);transform-origin:0 0;will-change:transform;">Module search</div>
<div style="position:absolute;left:263.35px;top:234.71px;font-size:30px;line-height:30px;font-weight:bold;font-style:normal;color:#fff;white-space:nowrap;transform:scaleX(0.9505);transform-origin:0 0;will-change:transform;">Users: phahn</div>
<div style="position:absolute;left:265.80px;top:319.29px;font-size:11px;line-height:11px;font-weight:bold;font-style:normal;color:#fff;white-space:nowrap;transform:scaleX(1.0511);transform-origin:0 0;will-change:transform;">General</div>
<div style="position:absolute;left:265.80px;top:342.19px;font-size:11px;line-height:11px;font-weight:bold;font-style:normal;color:#454545;white-space:nowrap;transform:scaleX(1.0155);transform-origin:0 0;will-change:transform;">Groups</div>
<div style="position:absolute;left:265.80px;top:365.19px;font-size:11px;line-height:11px;font-weight:bold;font-style:normal;color:#454545;white-space:nowrap;transform:scaleX(1.0195);transform-origin:0 0;will-change:transform;">Account</div>
<div style="position:absolute;left:265.80px;top:388.19px;font-size:11px;line-height:11px;font-weight:bold;font-style:normal;color:#454545;white-space:nowrap;transform:scaleX(0.9811);transform-origin:0 0;will-change:transform;">Contact</div>
<div style="position:absolute;left:265.80px;top:411.19px;font-size:11px;line-height:11px;font-weight:bold;font-style:normal;color:#454545;white-space:nowrap;transform:scaleX(1.0572);transform-origin:0 0;will-change:transform;">[Advanced settings]</div>
<div style="position:absolute;left:265.80px;top:434.19px;font-size:11px;line-height:11px;font-weight:bold;font-style:normal;color:#454545;white-space:nowrap;transform:scaleX(1.0363);transform-origin:0 0;will-change:transform;">[Options]</div>
<div style="position:absolute;left:265.80px;top:457.19px;font-size:11px;line-height:11px;font-weight:bold;font-style:normal;color:#454545;white-space:nowrap;transform:scaleX(1.0357);transform-origin:0 0;will-change:transform;">[Policies]</div>
<div style="position:absolute;left:262.35px;top:493.92px;font-size:19px;line-height:19px;font-weight:bold;font-style:normal;color:#222;white-space:nowrap;transform:scaleX(0.9508);transform-origin:0 0;will-change:transform;">Basic settings</div>
<div style="position:absolute;left:296.33px;top:535.93px;font-size:16.5px;line-height:16.5px;font-weight:normal;font-style:normal;color:#555;white-space:nowrap;transform:scaleX(0.9669);transform-origin:0 0;will-change:transform;">Upload new image</div>
<div style="position:absolute;left:263.10px;top:575.97px;font-size:11.5px;line-height:11.5px;font-weight:normal;font-style:normal;color:#333;white-space:nowrap;transform:scaleX(1.0311);transform-origin:0 0;will-change:transform;">Type:</div>
<div style="position:absolute;left:295.50px;top:575.97px;font-size:11.5px;line-height:11.5px;font-weight:normal;font-style:italic;color:#333;white-space:nowrap;transform:scaleX(0.9587);transform-origin:0 0;will-change:transform;">User</div>
<div style="position:absolute;left:263.10px;top:590.87px;font-size:11.5px;line-height:11.5px;font-weight:normal;font-style:normal;color:#333;white-space:nowrap;transform:scaleX(1.0361);transform-origin:0 0;will-change:transform;">Position:</div>
<div style="position:absolute;left:312.70px;top:590.87px;font-size:11.5px;line-height:11.5px;font-weight:normal;font-style:italic;color:#333;white-space:nowrap;transform:scaleX(1.0680);transform-origin:0 0;will-change:transform;">intranet.schulung1:/users</div>
<div style="position:absolute;left:652.10px;top:324.04px;font-size:18.5px;line-height:18.5px;font-weight:bold;font-style:normal;color:#222;white-space:nowrap;transform:scaleX(1.0005);transform-origin:0 0;will-change:transform;">User account</div>
<div style="position:absolute;left:784.48px;top:379.02px;font-size:19px;line-height:19px;font-weight:normal;font-style:normal;color:#2b2b2b;white-space:nowrap;transform:scaleX(1.0186);transform-origin:0 0;will-change:transform;">Philipp</div>
<div style="position:absolute;left:1039.02px;top:378.92px;font-size:19px;line-height:19px;font-weight:normal;font-style:normal;color:#2b2b2b;white-space:nowrap;transform:scaleX(0.9759);transform-origin:0 0;will-change:transform;">Hahn</div>
<div style="position:absolute;left:653.10px;top:407.77px;font-size:11.5px;line-height:11.5px;font-weight:normal;font-style:normal;color:#333;white-space:nowrap;transform:scaleX(1.0812);transform-origin:0 0;will-change:transform;-webkit-text-stroke:0.25px #333;">Title</div>
<div style="position:absolute;left:779.90px;top:407.77px;font-size:11.5px;line-height:11.5px;font-weight:normal;font-style:normal;color:#333;white-space:nowrap;transform:scaleX(1.0423);transform-origin:0 0;will-change:transform;-webkit-text-stroke:0.25px #333;">First name</div>
<div style="position:absolute;left:1033.90px;top:407.77px;font-size:11.5px;line-height:11.5px;font-weight:normal;font-style:normal;color:#333;white-space:nowrap;transform:scaleX(1.0195);transform-origin:0 0;will-change:transform;-webkit-text-stroke:0.25px #333;">Last name *</div>
<div style="position:absolute;left:657.19px;top:441.82px;font-size:19px;line-height:19px;font-weight:normal;font-style:normal;color:#2b2b2b;white-space:nowrap;transform:scaleX(1.0143);transform-origin:0 0;will-change:transform;">phahn</div>
<div style="position:absolute;left:1038.30px;top:442.02px;font-size:19px;line-height:19px;font-weight:normal;font-style:normal;color:#2b2b2b;white-space:nowrap;transform:scaleX(1.0020);transform-origin:0 0;will-change:transform;">Das ist ein Test</div>
<div style="position:absolute;left:652.80px;top:471.07px;font-size:11.5px;line-height:11.5px;font-weight:normal;font-style:normal;color:#333;white-space:nowrap;transform:scaleX(1.0243);transform-origin:0 0;will-change:transform;-webkit-text-stroke:0.25px #333;">User name *</div>
<div style="position:absolute;left:1034.00px;top:470.77px;font-size:11.5px;line-height:11.5px;font-weight:normal;font-style:normal;color:#333;white-space:nowrap;transform:scaleX(1.0573);transform-origin:0 0;will-change:transform;-webkit-text-stroke:0.25px #333;">Description</div>
<div style="position:absolute;left:653.00px;top:533.77px;font-size:11.5px;line-height:11.5px;font-weight:normal;font-style:normal;color:#333;white-space:nowrap;transform:scaleX(1.0180);transform-origin:0 0;will-change:transform;-webkit-text-stroke:0.25px #333;">Password</div>
<div style="position:absolute;left:1034.00px;top:533.77px;font-size:11.5px;line-height:11.5px;font-weight:normal;font-style:normal;color:#333;white-space:nowrap;transform:scaleX(1.0484);transform-origin:0 0;will-change:transform;-webkit-text-stroke:0.25px #333;">Password (retype)</div>
<div style="position:absolute;left:668.30px;top:578.77px;font-size:11.5px;line-height:11.5px;font-weight:normal;font-style:normal;color:#333;white-space:nowrap;transform:scaleX(1.0559);transform-origin:0 0;will-change:transform;-webkit-text-stroke:0.25px #333;">Override password history</div>
<div style="position:absolute;left:852.60px;top:578.77px;font-size:11.5px;line-height:11.5px;font-weight:normal;font-style:normal;color:#333;white-space:nowrap;transform:scaleX(1.0416);transform-origin:0 0;will-change:transform;-webkit-text-stroke:0.25px #333;">Override password check</div>
<div style="position:absolute;left:653.00px;top:641.87px;font-size:11.5px;line-height:11.5px;font-weight:normal;font-style:normal;color:#333;white-space:nowrap;transform:scaleX(1.0441);transform-origin:0 0;will-change:transform;-webkit-text-stroke:0.25px #333;">Primary e-mail address</div>
<div style="position:absolute;left:652.10px;top:728.04px;font-size:18.5px;line-height:18.5px;font-weight:bold;font-style:normal;color:#222;white-space:nowrap;transform:scaleX(0.9982);transform-origin:0 0;will-change:transform;">Personal information</div>
<div style="position:absolute;left:657.40px;top:783.72px;font-size:19px;line-height:19px;font-weight:normal;font-style:normal;color:#2b2b2b;white-space:nowrap;transform:scaleX(0.9984);transform-origin:0 0;will-change:transform;">Philipp Hahn</div>
<div style="position:absolute;left:653.00px;top:813.07px;font-size:11.5px;line-height:11.5px;font-weight:normal;font-style:normal;color:#333;white-space:nowrap;transform:scaleX(1.0192);transform-origin:0 0;will-change:transform;-webkit-text-stroke:0.25px #333;">Display name</div>
<div style="position:absolute;left:657.90px;top:846.82px;font-size:19px;line-height:19px;font-weight:normal;font-style:normal;color:#2b2b2b;white-space:nowrap;transform:scaleX(0.9510);transform-origin:0 0;will-change:transform;">XX-YY 00</div>
<div style="position:absolute;left:652.90px;top:875.97px;font-size:11.5px;line-height:11.5px;font-weight:normal;font-style:normal;color:#333;white-space:nowrap;transform:scaleX(1.0293);transform-origin:0 0;will-change:transform;-webkit-text-stroke:0.25px #333;">Car license</div>
<div style="position:absolute;left:652.90px;top:939.27px;font-size:11.5px;line-height:11.5px;font-weight:normal;font-style:normal;color:#333;white-space:nowrap;transform:scaleX(1.0293);transform-origin:0 0;will-change:transform;-webkit-text-stroke:0.25px #333;">Car license</div>
<div style="position:absolute;left:683.86px;top:974.61px;font-size:17px;line-height:17px;font-weight:normal;font-style:normal;color:#555;white-space:nowrap;transform:scaleX(0.9392);transform-origin:0 0;will-change:transform;">New entry</div>

</body></html>
